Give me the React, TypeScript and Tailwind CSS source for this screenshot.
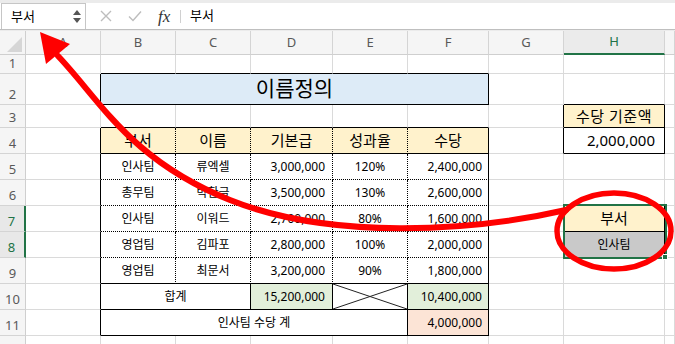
import React from "react";

type Bd = "g" | "s" | "d";

const R: Record<Bd, string> = {
  g: "border-r-[#dadada]",
  s: "border-r-black",
  d: "border-r-black [border-right-style:dotted]",
};
const B: Record<Bd, string> = {
  g: "border-b-[#dadada]",
  s: "border-b-black",
  d: "border-b-black [border-bottom-style:dotted]",
};

const C = ({
  r = "g",
  b = "g",
  className = "",
  children,
}: {
  r?: Bd;
  b?: Bd;
  className?: string;
  children?: React.ReactNode;
}) => (
  <div
    className={`border-r border-b flex items-center min-w-0 overflow-hidden whitespace-nowrap text-black ${R[r]} ${B[b]} ${className}`}
  >
    {children}
  </div>
);

const RowHead = ({ n, sel = false }: { n: number; sel?: boolean }) => (
  <div
    className={
      sel
        ? "border-r-2 border-b border-r-[#217346] border-b-[#d4d4d4] bg-[#e8e8e8] flex items-end justify-center pb-[1px] pr-[1px] text-[13px] leading-[17px] text-[#217346]"
        : "border-r border-b border-r-[#cfcfcf] border-b-[#d4d4d4] bg-[#f5f5f5] flex items-end justify-center pb-[1px] text-[13px] leading-[17px] text-[#595959]"
    }
  >
    {n}
  </div>
);

const ColHead = ({ l, sel = false }: { l: string; sel?: boolean }) => (
  <div
    className={
      sel
        ? "border-r border-b-2 border-r-[#d4d4d4] border-b-[#217346] bg-[#ebebeb] flex items-center justify-center text-[13px] text-[#217346]"
        : "border-r border-b border-r-[#d4d4d4] border-b-[#cfcfcf] bg-[#f5f5f5] flex items-center justify-center text-[13px] text-[#595959]"
    }
  >
    {l}
  </div>
);

const rows = [
  ["인사팀", "류엑셀", "3,000,000", "120%", "2,400,000"],
  ["총무팀", "박한글", "3,500,000", "130%", "2,600,000"],
  ["인사팀", "이워드", "2,700,000", "80%", "1,600,000"],
  ["영업팀", "김파포", "2,800,000", "100%", "2,000,000"],
  ["영업팀", "최문서", "3,200,000", "90%", "1,800,000"],
];

export default function App() {
  return (
    <div className="relative w-[675px] h-[344px] overflow-hidden bg-white font-['Noto_Sans','Noto_Sans_CJK_KR',sans-serif]">
      {/* formula bar */}
      <div className="h-[31px] bg-[#ebebeb] pt-[3px] pb-[1px]">
        <div className="h-[27px] flex items-center bg-white border-b border-[#bfbfbf]">
          <div className="ml-px w-[85px] h-full border border-b-0 border-[#c6c6c6] flex items-center justify-between pl-[9px] pr-[4px]">
            <span className="text-[13px] text-black">부서</span>
            <div className="flex flex-col items-center gap-[3px] text-[#555]">
              <svg width="8" height="5" viewBox="0 0 8 5">
                <path d="M0 5 L4 0 L8 5 Z" fill="#555" />
              </svg>
              <svg width="8" height="5" viewBox="0 0 8 5">
                <path d="M0 0 L4 5 L8 0 Z" fill="#555" />
              </svg>
            </div>
          </div>
          <div className="w-[14px]" />
          <svg width="12" height="12" viewBox="0 0 12 12">
            <path d="M1 1 L11 11 M11 1 L1 11" stroke="#bdbdbd" strokeWidth="1.4" />
          </svg>
          <div className="w-[16px]" />
          <svg width="14" height="12" viewBox="0 0 14 12">
            <path d="M1 6.5 L5 10.5 L13 1.5" stroke="#bdbdbd" strokeWidth="1.4" fill="none" />
          </svg>
          <div className="w-[16px]" />
          <span className="w-[17px] font-['Liberation_Serif',serif] italic text-[17px] leading-none text-[#333]">
            fx
          </span>
          <div className="w-[5px]" />
          <div className="w-px h-[13px] bg-[#d0d0d0]" />
          <div className="w-[9px]" />
          <span className="text-[13px] text-black">부서</span>
        </div>
      </div>

      {/* sheet */}
      <div className="grid grid-cols-[26px_75px_75px_75px_82px_75px_81px_75px_101px_1fr] grid-rows-[24px_19px_31px_23px_26px_26px_26px_26px_26px_26px_26px_26px_26px] text-[12px]">
        {/* header */}
        <div className="border-r border-b border-r-[#cfcfcf] border-b-[#cfcfcf] bg-[#f5f5f5] flex items-end justify-end pr-[3px] pb-[2px]">
          <svg width="15" height="15" viewBox="0 0 15 15">
            <path d="M15 0 L15 15 L0 15 Z" fill="#d6d6d6" />
          </svg>
        </div>
        {["A", "B", "C", "D", "E", "F", "G"].map((l) => (
          <ColHead key={l} l={l} />
        ))}
        <ColHead l="H" sel />
        <ColHead l="" />

        {/* row 1 */}
        <RowHead n={1} />
        <C />
        <C b="s" />
        <C b="s" />
        <C b="s" />
        <C b="s" />
        <C b="s" />
        <C />
        <C />
        <C />

        {/* row 2 */}
        <RowHead n={2} />
        <C r="s" />
        <C r="s" b="s" className="col-span-5 justify-center bg-[#ddebf7] text-[21px]">
          이름정의
        </C>
        <C />
        <C b="s" />
        <C />

        {/* row 3 */}
        <RowHead n={3} />
        <C />
        <C b="s" />
        <C b="s" />
        <C b="s" />
        <C b="s" />
        <C b="s" />
        <C r="s" />
        <C r="s" b="s" className="justify-center bg-[#fff2cc] text-[15px] tracking-[0.5px]">
          수당 기준액
        </C>
        <C />

        {/* row 4 */}
        <RowHead n={4} />
        <C r="s" />
        {["부서", "이름", "기본급", "성과율"].map((h) => (
          <C key={h} r="d" b="s" className="justify-center bg-[#fff2cc] text-[15px]">
            {h}
          </C>
        ))}
        <C r="s" b="s" className="justify-center bg-[#fff2cc] text-[15px]">
          수당
        </C>
        <C r="s" />
        <C r="s" b="s" className="justify-end pr-[9px] text-[15px]">
          2,000,000
        </C>
        <C />

        {/* rows 5-9 */}
        {rows.map((row, i) => {
          const n = i + 5;
          const last = i === rows.length - 1;
          const bb: Bd = last ? "s" : "d";
          return (
            <React.Fragment key={n}>
              <RowHead n={n} sel={n === 7 || n === 8} />
              <C r="s" />
              <C r="d" b={bb} className="justify-center">
                {row[0]}
              </C>
              <C r="d" b={bb} className="justify-center">
                {row[1]}
              </C>
              <C r="d" b={bb} className="justify-end pr-[7px]">
                {row[2]}
              </C>
              <C r="d" b={bb} className="justify-center">
                {row[3]}
              </C>
              <C r="s" b={bb} className="justify-end pr-[6px]">
                {row[4]}
              </C>
              <C r={n === 7 || n === 8 ? "s" : "g"} />
              {n === 7 ? (
                <C r="s" b="s" className="justify-center bg-[#fff2cc] text-[15px]">
                  부서
                </C>
              ) : n === 8 ? (
                <C r="s" b="s" className="justify-center bg-[#c9c9c9]">
                  인사팀
                </C>
              ) : (
                <C b={n === 6 ? "s" : "g"} />
              )}
              <C />
            </React.Fragment>
          );
        })}

        {/* row 10 */}
        <RowHead n={10} />
        <C r="s" />
        <C r="s" b="s" className="col-span-2 justify-center">
          합계
        </C>
        <C r="s" b="s" className="justify-end pr-[7px] bg-[#e2efda]">
          15,200,000
        </C>
        <C r="s" b="s" className="relative">
          <svg className="w-full h-full" viewBox="0 0 100 100" preserveAspectRatio="none">
            <path d="M0 0 L100 100 M0 100 L100 0" stroke="#222" strokeWidth="1" vectorEffect="non-scaling-stroke" />
          </svg>
        </C>
        <C r="s" b="s" className="justify-end pr-[6px] bg-[#e2efda]">
          10,400,000
        </C>
        <C />
        <C />
        <C />

        {/* row 11 */}
        <RowHead n={11} />
        <C r="s" />
        <C r="s" b="s" className="col-span-4 justify-center">
          인사팀 수당 계
        </C>
        <C r="s" b="s" className="justify-end pr-[6px] bg-[#fce4d6]">
          4,000,000
        </C>
        <C />
        <C />
        <C />

        {/* row 12 */}
        <RowHead n={12} />
        <C />
        <C />
        <C />
        <C />
        <C />
        <C />
        <C />
        <C />
        <C />
      </div>

      {/* selection H7:H8 */}
      <div className="absolute left-[563px] top-[204px] w-[104px] h-[55px] border-2 border-[#217346]" />
      <div className="absolute left-[662px] top-[254px] w-[6px] h-[6px] bg-[#217346] border border-white" />

      {/* red annotation */}
      <svg className="absolute inset-0 pointer-events-none" width="675" height="344" viewBox="0 0 675 344">
        <ellipse cx="614" cy="231" rx="57" ry="38" fill="none" stroke="#ff0000" strokeWidth="5.5" />
        <path
          d="M566 210 C470 232 330 240 230 200 S100 100 58 56"
          fill="none"
          stroke="#ff0000"
          strokeWidth="6"
          strokeLinecap="round"
        />
        <polygon points="40,32 70,44 46,64" fill="#ff0000" />
      </svg>
    </div>
  );
}
